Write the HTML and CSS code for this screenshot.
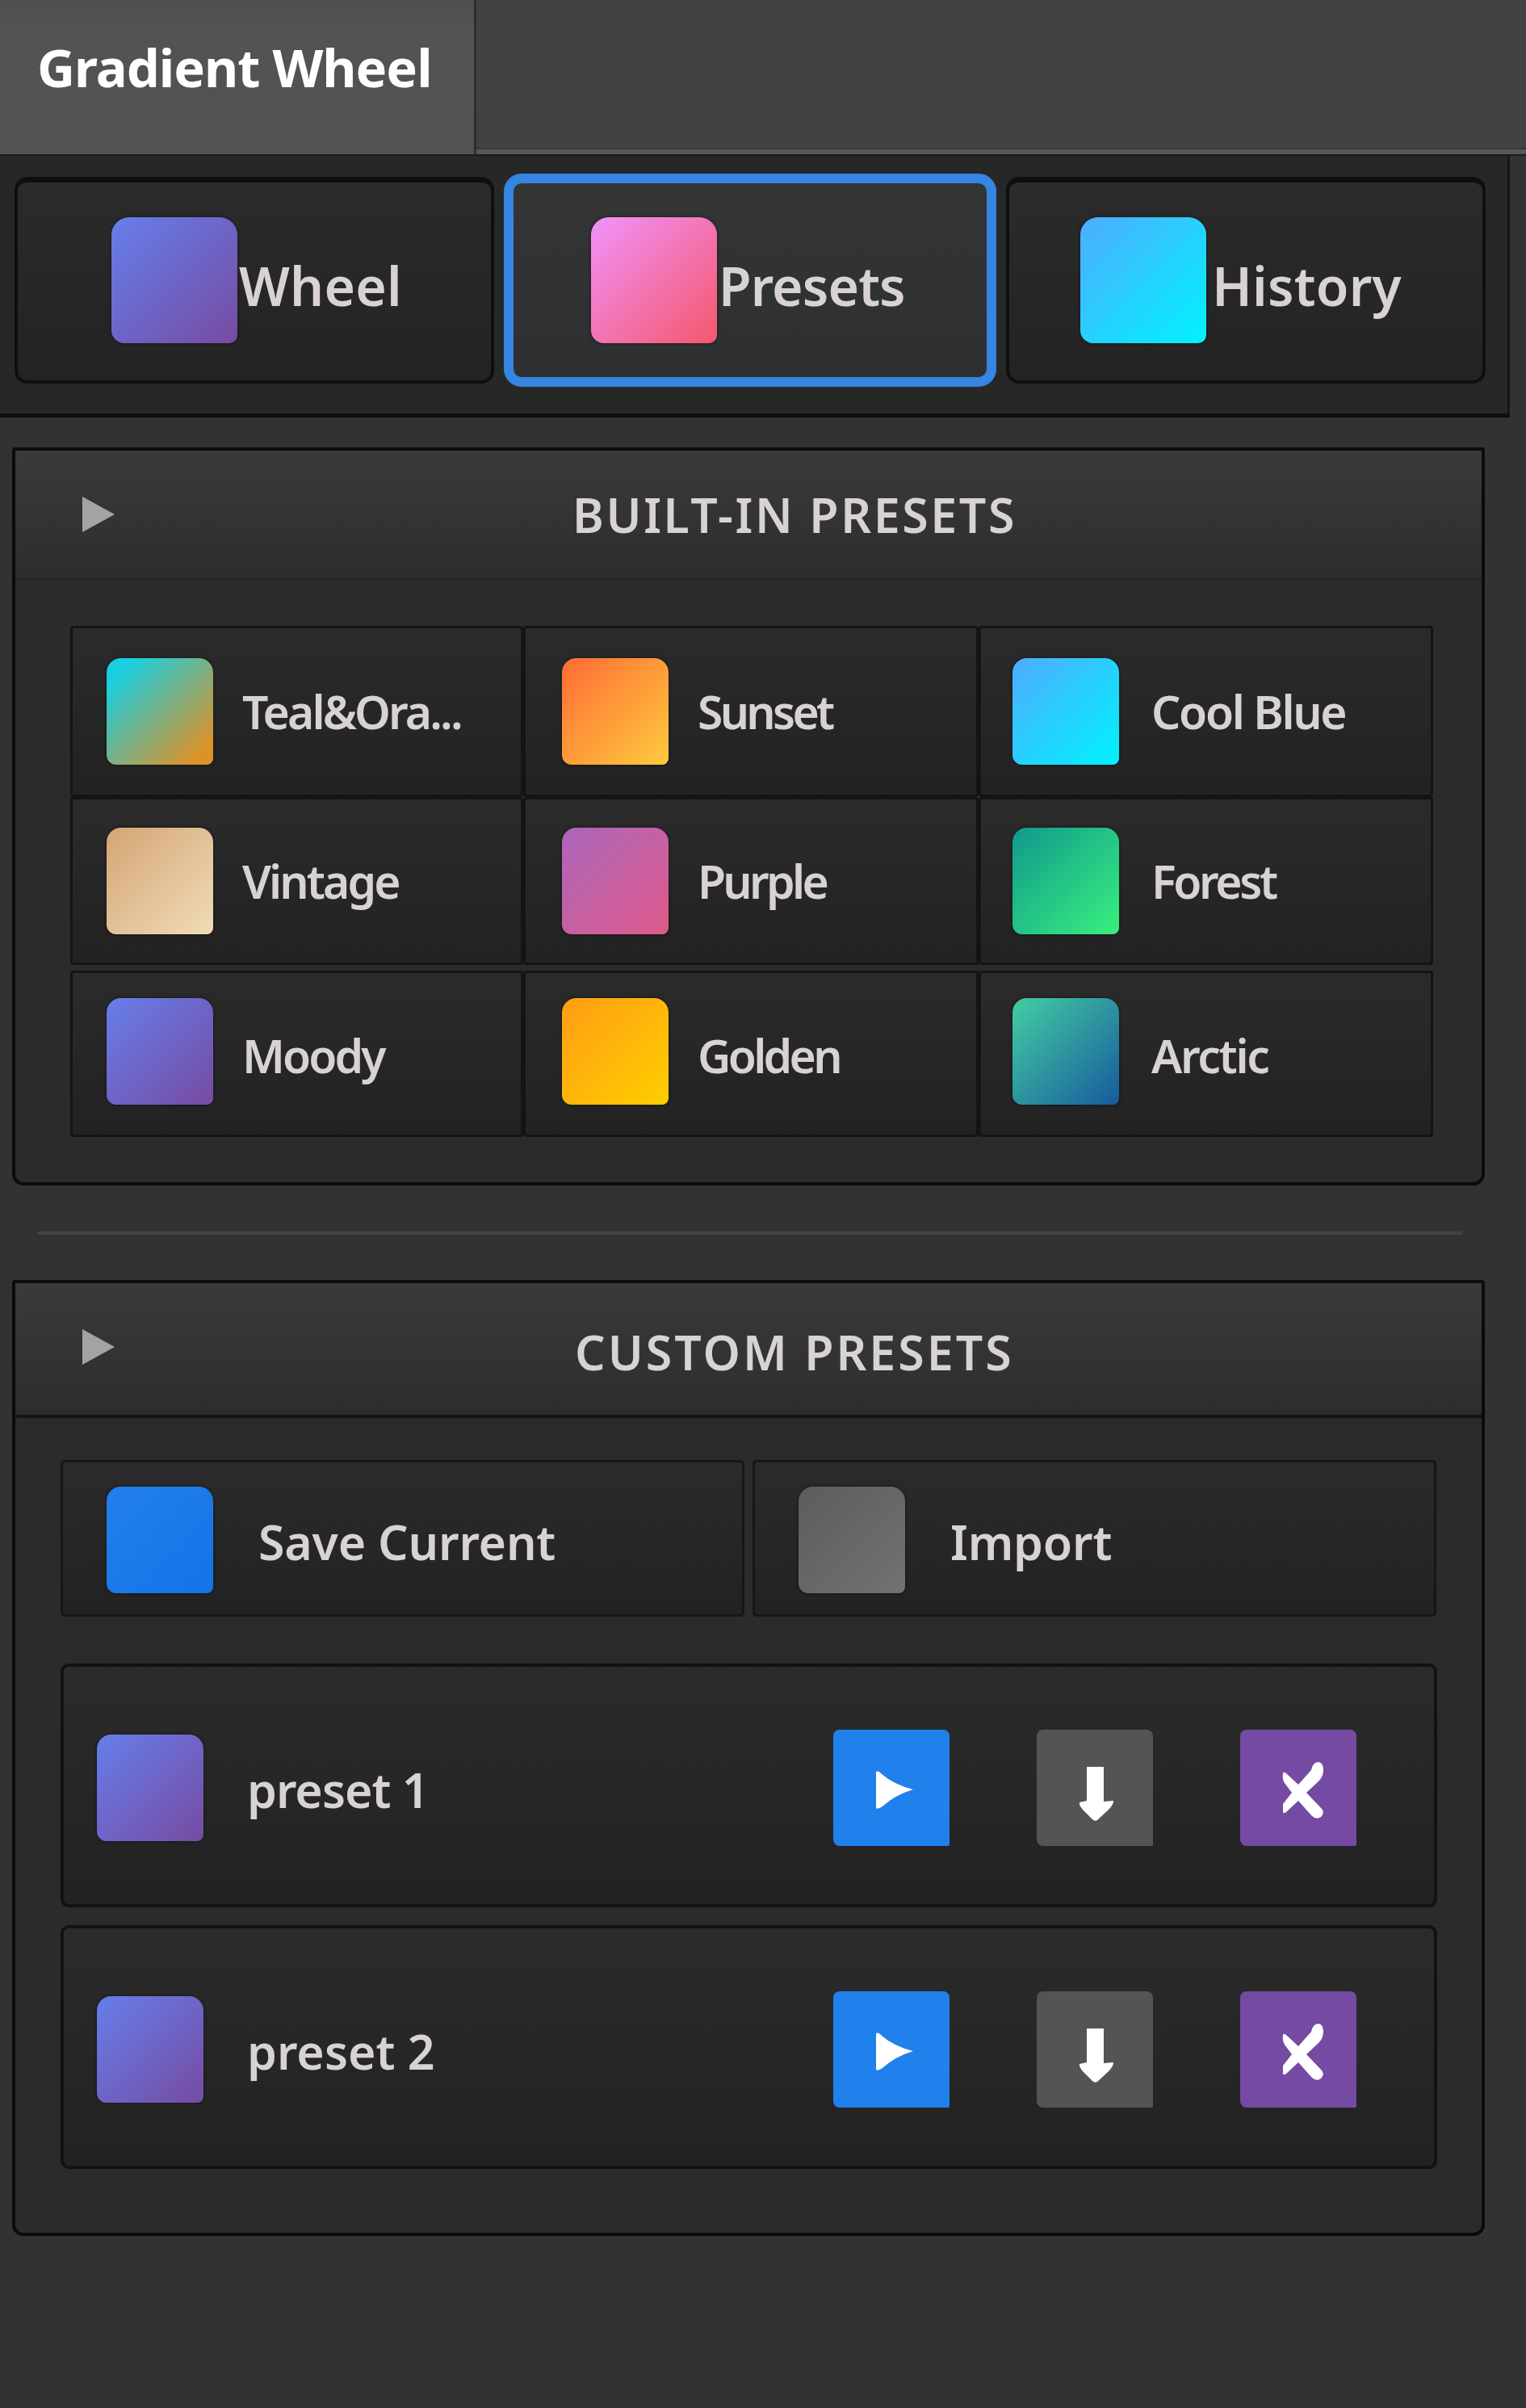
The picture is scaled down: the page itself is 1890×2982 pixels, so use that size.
FILE: index.html
```html
<!DOCTYPE html>
<html lang="en">
<head>
    <meta charset="UTF-8">
    <meta name="viewport" content="width=device-width, initial-scale=1.0">
    <title>Gradient Wheel</title>
    <link rel="stylesheet" href="styles.css">
</head>
<body>
    <header class="titlebar">
        <h1 class="title">Gradient Wheel</h1>
        <div class="titlebar-rest"></div>
    </header>

    <nav class="tabs">
        <button class="tab tab-wheel"><span class="swatch moody"></span><span class="label">Wheel</span></button>
        <button class="tab tab-presets active"><span class="swatch pink"></span><span class="label">Presets</span></button>
        <button class="tab tab-history"><span class="swatch cool"></span><span class="label">History</span></button>
    </nav>

    <section class="panel built-in">
        <div class="panel-header">
            <svg class="arrow" viewBox="0 0 40 44"><path d="M0 0L40 22L0 44Z"/></svg>
            <h2>BUILT-IN PRESETS</h2>
        </div>
        <div class="preset-grid">
            <div class="preset"><span class="swatch teal"></span><span class="label">Teal&amp;Ora...</span></div>
            <div class="preset"><span class="swatch sunset"></span><span class="label">Sunset</span></div>
            <div class="preset"><span class="swatch cool"></span><span class="label loose">Cool Blue</span></div>
            <div class="preset middle"><span class="swatch vintage"></span><span class="label">Vintage</span></div>
            <div class="preset middle"><span class="swatch purple"></span><span class="label">Purple</span></div>
            <div class="preset middle"><span class="swatch forest"></span><span class="label">Forest</span></div>
            <div class="preset last"><span class="swatch moody"></span><span class="label">Moody</span></div>
            <div class="preset last"><span class="swatch golden"></span><span class="label">Golden</span></div>
            <div class="preset last"><span class="swatch arctic"></span><span class="label loose">Arctic</span></div>
        </div>
    </section>

    <hr class="divider">

    <section class="panel custom">
        <div class="panel-header">
            <svg class="arrow" viewBox="0 0 40 44"><path d="M0 0L40 22L0 44Z"/></svg>
            <h2>CUSTOM PRESETS</h2>
        </div>
        <div class="toolbar">
            <button class="tool"><span class="swatch blue"></span><span class="label">Save Current</span></button>
            <button class="tool"><span class="swatch gray"></span><span class="label">Import</span></button>
        </div>
        <div class="saved-list">
            <div class="saved">
                <span class="swatch moody"></span>
                <span class="label narrow">preset 1</span>
                <div class="actions">
                    <button class="action apply"><svg viewBox="0 0 144 144"><path d="M53 52Q56 50 60 55Q75 68 99 74Q76 81 61 95Q55 99 53 97Z"/></svg></button>
                    <button class="action export"><svg viewBox="0 0 144 144"><path d="M62 46H83V89L95 88Q95 93 89 99L75 112Q72 114 69 111L57 99Q52 93 53 90L62 88Z"/></svg></button>
                    <button class="action remove"><svg viewBox="0 0 144 144"><path d="M53 54Q54 51 58 55L72 68L88 50Q90 40 97 40Q103 41 103 50Q103 58 97 64L82 78L101 98Q105 103 100 108Q95 112 89 107L72 88L57 102Q53 105 53 101V92L64 78L55 66Q52 62 53 54Z"/></svg></button>
                </div>
            </div>
            <div class="saved">
                <span class="swatch moody"></span>
                <span class="label">preset 2</span>
                <div class="actions">
                    <button class="action apply"><svg viewBox="0 0 144 144"><path d="M53 52Q56 50 60 55Q75 68 99 74Q76 81 61 95Q55 99 53 97Z"/></svg></button>
                    <button class="action export"><svg viewBox="0 0 144 144"><path d="M62 46H83V89L95 88Q95 93 89 99L75 112Q72 114 69 111L57 99Q52 93 53 90L62 88Z"/></svg></button>
                    <button class="action remove"><svg viewBox="0 0 144 144"><path d="M53 54Q54 51 58 55L72 68L88 50Q90 40 97 40Q103 41 103 50Q103 58 97 64L82 78L101 98Q105 103 100 108Q95 112 89 107L72 88L57 102Q53 105 53 101V92L64 78L55 66Q52 62 53 54Z"/></svg></button>
                </div>
            </div>
        </div>
    </section>
</body>
</html>
```
FILE: styles.css
```css
* {
    box-sizing: border-box;
}
body {
    font-family: "Noto Sans", "Open Sans", sans-serif;
    margin: 0;
    min-height: 2982px;
    background: #323232;
    color: #d8d2d2;
}
button {
    font: inherit;
    color: inherit;
    margin: 0;
    padding: 0;
    border: none;
    text-align: left;
    cursor: pointer;
}
h1, h2 {
    margin: 0;
}

/* Title bar */
.titlebar {
    display: flex;
    align-items: flex-start;
    height: 193px;
    background: #555759;
    border-bottom: 2px solid #1a1c1c;
}
.title {
    width: 590px;
    height: 191px;
    padding: 38px 0 0 46px;
    background: linear-gradient(#4f4f4f, #535353 20%, #525252);
    border-right: 3px solid #2e2e2e;
    font-size: 65px;
    line-height: 90px;
    font-weight: 700;
    letter-spacing: -1px;
    white-space: nowrap;
    color: #fff;
}
.titlebar-rest {
    flex: 1;
    height: 185px;
    background: #424242;
    border-bottom: 2px solid #363738;
}

/* Tabs */
.tabs {
    display: flex;
    align-items: center;
    gap: 12px;
    width: 1870px;
    height: 324px;
    padding: 0 0 12px 18px;
    background: #262828;
    border-right: 3px solid #151616;
    border-bottom: 5px solid #0d0e0e;
}
.tab {
    display: flex;
    align-items: center;
    width: 594px;
    height: 256px;
    padding-bottom: 2px;
    background: linear-gradient(#2b2b2b, #232323);
    border: 4px solid #0e0f0f;
    border-top-width: 7px;
    border-radius: 16px;
    font-size: 66px;
    font-weight: 600;
    letter-spacing: 0.2px;
}
.tab.active {
    width: 610px;
    height: 264px;
    padding-bottom: 0;
    background: linear-gradient(#343535, #2d2f31);
    border: 12px solid #3585e2;
    border-radius: 22px;
    letter-spacing: -0.9px;
}
.tab .swatch {
    width: 156px;
    height: 156px;
    border-radius: 22px 22px 10px 16px;
}
.tab .label {
    padding-top: 12px;
}
.tab-wheel {
    padding-left: 116px;
}
.tab-wheel .label {
    padding-left: 2px;
}
.tab-presets {
    padding-left: 96px;
}
.tab-presets .label {
    padding-left: 2px;
}
.tab-history {
    padding-left: 88px;
}
.tab-history .label {
    padding-left: 7px;
}

/* Swatches */
.swatch {
    flex: none;
    width: 132px;
    height: 132px;
    border-radius: 18px 18px 8px 12px;
    box-shadow: 0 0 4px rgba(0, 0, 0, 0.5);
}
.moody { background: linear-gradient(135deg, #667eea, #764ba2); }
.pink { background: linear-gradient(135deg, #f093fb, #f5576c); }
.cool { background: linear-gradient(135deg, #4facfe, #00f2fe); }
.teal { background: linear-gradient(135deg, #18cfe2 12%, #de9226 90%); }
.sunset { background: linear-gradient(135deg, #ff6b35, #fecb3e); }
.vintage { background: linear-gradient(135deg, #d4a574, #f0dcb8); }
.purple { background: linear-gradient(135deg, #ad66bd, #dd5a89); }
.forest { background: linear-gradient(135deg, #11998e, #38ef7d); }
.golden { background: linear-gradient(135deg, #ff9d14, #ffce00); }
.arctic { background: linear-gradient(135deg, #43cea2, #185a9d); }
.blue { background: linear-gradient(135deg, #237fee, #1473e6); }
.gray { background: linear-gradient(135deg, #5c5c5c, #727272); }

.label {
    white-space: nowrap;
}

/* Panels */
.panel {
    width: 1824px;
    margin-left: 15px;
    background: #2b2b2b;
    border: 4px solid #0a0b0b;
    border-radius: 4px 4px 14px 14px;
}
.built-in {
    height: 914px;
    margin-top: 37px;
}
.custom {
    height: 1184px;
}
.panel-header {
    display: flex;
    align-items: center;
    height: 160px;
    padding-left: 83px;
    background: linear-gradient(#3a3a3a, #2d2d2d);
    border-bottom: 2px solid #242525;
}
.custom .panel-header {
    height: 167px;
    border-bottom: 4px solid #121313;
}
.arrow {
    width: 40px;
    height: 44px;
    fill: #a2a3a5;
}
.custom .arrow {
    margin-bottom: 6px;
}
.panel-header h2 {
    margin-left: 567px;
    font-size: 59px;
    font-weight: 600;
    letter-spacing: 2.6px;
    white-space: nowrap;
}
.custom .panel-header h2 {
    margin-left: 570px;
    padding-top: 6px;
    letter-spacing: 3px;
}

/* Built-in presets */
.preset-grid {
    display: grid;
    grid-template-columns: 561px 564px 563px;
    grid-template-rows: 212px 215px 206px;
    margin: 57px 0 0 68px;
}
.preset {
    display: flex;
    align-items: center;
    gap: 36px;
    padding-left: 42px;
    background: linear-gradient(#2b2b2b, #222);
    border: 3px solid #131414;
    border-radius: 4px;
    font-size: 57px;
    font-weight: 600;
    letter-spacing: -2.9px;
}
.preset:nth-child(3n+2) {
    padding-left: 45px;
    letter-spacing: -3.7px;
}
.preset:nth-child(3n) {
    gap: 40px;
    padding-left: 39px;
    letter-spacing: -3.4px;
}
.preset.middle {
    margin-bottom: 7px;
}
.preset.last .swatch {
    margin-bottom: 7px;
}
.preset.last .label {
    padding-top: 3px;
}
.preset .loose {
    letter-spacing: -2.3px;
}

.divider {
    width: 1766px;
    height: 4px;
    margin: 57px 0 56px 46px;
    border: none;
    background: #424145;
}

/* Custom presets */
.toolbar {
    display: flex;
    gap: 10px;
    margin: 52px 0 0 56px;
}
.tool {
    display: flex;
    align-items: center;
    gap: 56px;
    width: 847px;
    height: 194px;
    padding: 4px 0 0 54px;
    background: linear-gradient(#2b2b2b, #222);
    border: 3px solid #151616;
    border-radius: 5px;
    font-size: 59px;
    font-weight: 600;
    letter-spacing: -0.2px;
}
.tool .label {
    padding-top: 4px;
}
.saved-list {
    display: flex;
    flex-direction: column;
    gap: 22px;
    margin: 58px 0 0 56px;
}
.saved {
    display: flex;
    align-items: center;
    width: 1705px;
    height: 302px;
    padding: 6px 96px 0 41px;
    background: linear-gradient(#2b2b2b, #222);
    border: 4px solid #111212;
    border-radius: 10px;
    font-size: 59px;
    font-weight: 600;
}
.saved .label {
    margin-left: 54px;
    padding-top: 3px;
}
.narrow {
    letter-spacing: -1px;
}
.actions {
    display: flex;
    gap: 108px;
    margin-left: auto;
}
.action {
    width: 144px;
    height: 144px;
    border-radius: 8px 8px 2px 8px;
}
.action svg {
    display: block;
    fill: #fff;
}
.apply {
    background: #2080ec;
}
.export {
    background: #545454;
}
.remove {
    background: #754aa3;
}
```
